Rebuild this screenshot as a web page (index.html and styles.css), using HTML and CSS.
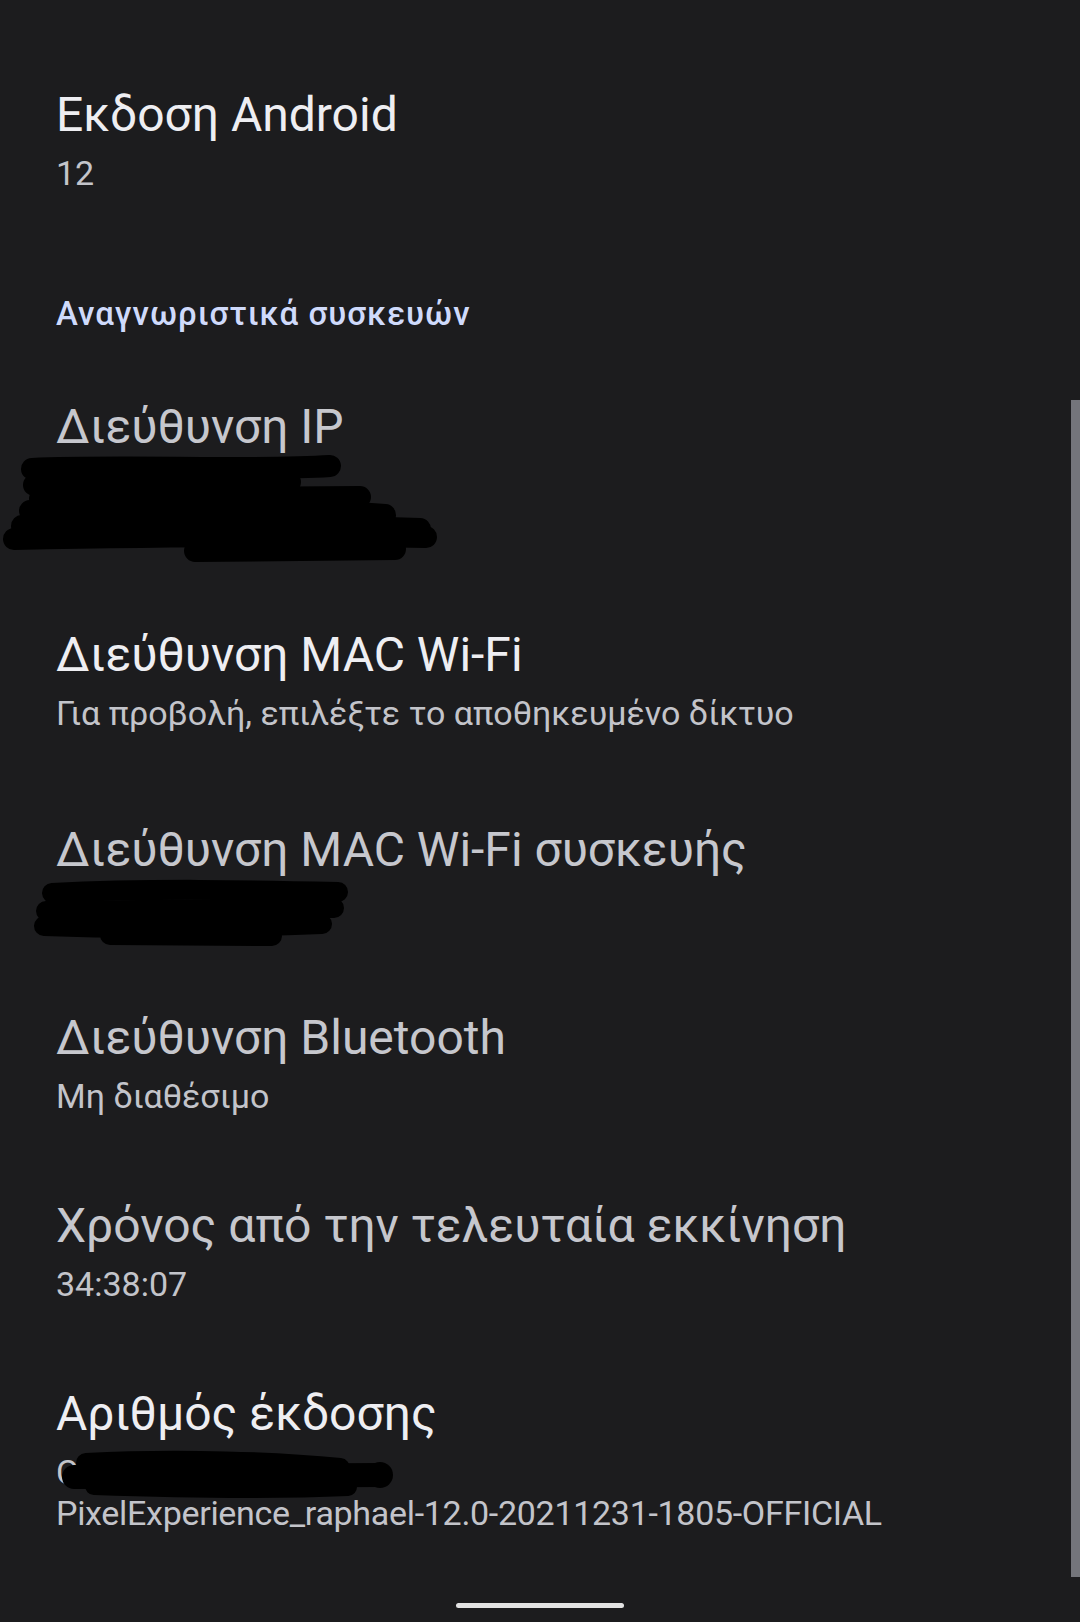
FILE: index.html
```html
<!DOCTYPE html>
<html lang="el">
<head>
<meta charset="utf-8">
<title>Πληροφορίες τηλεφώνου</title>
<link rel="stylesheet" href="styles.css">
</head>
<body>
<main class="screen">
  <section class="list">
    <div class="pref pref-first">
      <div class="pref-title">Εκδοση Android</div>
      <div class="pref-summary">12</div>
    </div>

    <div class="category">Αναγνωριστικά συσκευών</div>

    <div class="pref pref-ip">
      <div class="pref-title dim">Διεύθυνση IP</div>
      <div class="pref-summary lines-2"></div>
      <svg class="scribble" viewBox="0 0 1080 230" width="1080" height="230" aria-hidden="true">
        <g fill="none" stroke="#000" stroke-linecap="round" stroke-width="22">
          <path d="M32 110 C 120 106, 250 112, 330 107"/>
          <path d="M34 126 L 290 123"/>
          <path d="M40 140 L 360 138"/>
          <path d="M30 152 C 150 148, 300 150, 385 156"/>
          <path d="M22 167 C 150 165, 300 166, 420 170"/>
          <path d="M14 180 C 120 178, 300 176, 426 178"/>
          <path d="M195 192 L 395 190"/>
        </g>
      </svg>
    </div>

    <div class="pref pref-mac">
      <div class="pref-title">Διεύθυνση MAC Wi-Fi</div>
      <div class="pref-summary">Για προβολή, επιλέξτε το αποθηκευμένο δίκτυο</div>
    </div>

    <div class="pref">
      <div class="pref-title dim">Διεύθυνση MAC Wi-Fi συσκευής</div>
      <div class="pref-summary lines-1"></div>
      <svg class="scribble" viewBox="0 0 1080 188" width="1080" height="188" aria-hidden="true">
        <g fill="none" stroke="#000" stroke-linecap="round" stroke-width="20">
          <path d="M52 109 C 150 104, 250 106, 338 108"/>
          <path d="M46 127 L 334 124"/>
          <path d="M44 142 C 150 146, 250 143, 322 140"/>
          <path d="M110 151 L 272 152"/>
        </g>
      </svg>
    </div>

    <div class="pref">
      <div class="pref-title dim">Διεύθυνση Bluetooth</div>
      <div class="pref-summary">Μη διαθέσιμο</div>
    </div>

    <div class="pref">
      <div class="pref-title dim">Χρόνος από την τελευταία εκκίνηση</div>
      <div class="pref-summary">34:38:07</div>
    </div>

    <div class="pref">
      <div class="pref-title">Αριθμός έκδοσης</div>
      <div class="pref-summary">C<br><span class="build-id">PixelExperience_raphael-12.0-20211231-1805-OFFICIAL</span></div>
      <svg class="scribble" viewBox="0 0 1080 188" width="1080" height="188" aria-hidden="true">
        <g fill="none" stroke="#000" stroke-linecap="round">
          <path d="M86 115 C 180 110, 280 114, 340 120" stroke-width="20"/>
          <path d="M74 129 C 180 128, 300 128, 380 127" stroke-width="24"/>
          <path d="M94 138 C 180 141, 280 142, 348 139" stroke-width="18"/>
        </g>
        <circle cx="380" cy="127" r="13" fill="#000"/>
      </svg>
    </div>
  </section>

  <div class="scrollbar"></div>
  <div class="home-indicator"></div>
</main>
</body>
</html>
```

FILE: styles.css
```css
html, body {
  margin: 0;
  padding: 0;
}

body {
  background: #1c1c1e;
  font-family: Roboto, "Noto Sans", sans-serif;
  color: #eeeef2;
}

.screen {
  position: relative;
  width: 1080px;
  height: 1622px;
  overflow: hidden;
}

.list {
  padding-top: 49px;
}

.pref {
  position: relative;
  padding: 36px 60px 43px 56px;
}

.pref-mac {
  padding-bottom: 50px;
}

.pref-ip {
  padding-top: 38px;
  padding-bottom: 42px;
}

.pref-title {
  font-size: 48px;
  line-height: 60px;
  color: #eeeef2;
  white-space: nowrap;
}

.pref-title.dim {
  color: #c6c7cd;
}

.pref-summary {
  margin-top: 8px;
  font-size: 34px;
  line-height: 41px;
  color: #c3c4ca;
  white-space: nowrap;
}

.build-id {
  letter-spacing: -0.3px;
}

.lines-1 {
  height: 41px;
}

.lines-2 {
  height: 82px;
}

.category {
  padding: 57px 56px 25px;
  font-size: 33px;
  font-weight: 500;
  letter-spacing: 1px;
  line-height: 40px;
  color: #cfdafb;
}

.scribble {
  position: absolute;
  left: 0;
  top: 0;
  pointer-events: none;
}

.scrollbar {
  position: absolute;
  left: 1071px;
  top: 400px;
  width: 9px;
  height: 1177px;
  background: #74757b;
}

.home-indicator {
  position: absolute;
  left: 456px;
  top: 1603px;
  width: 168px;
  height: 5px;
  border-radius: 3px;
  background: #e2e2e2;
}
```
